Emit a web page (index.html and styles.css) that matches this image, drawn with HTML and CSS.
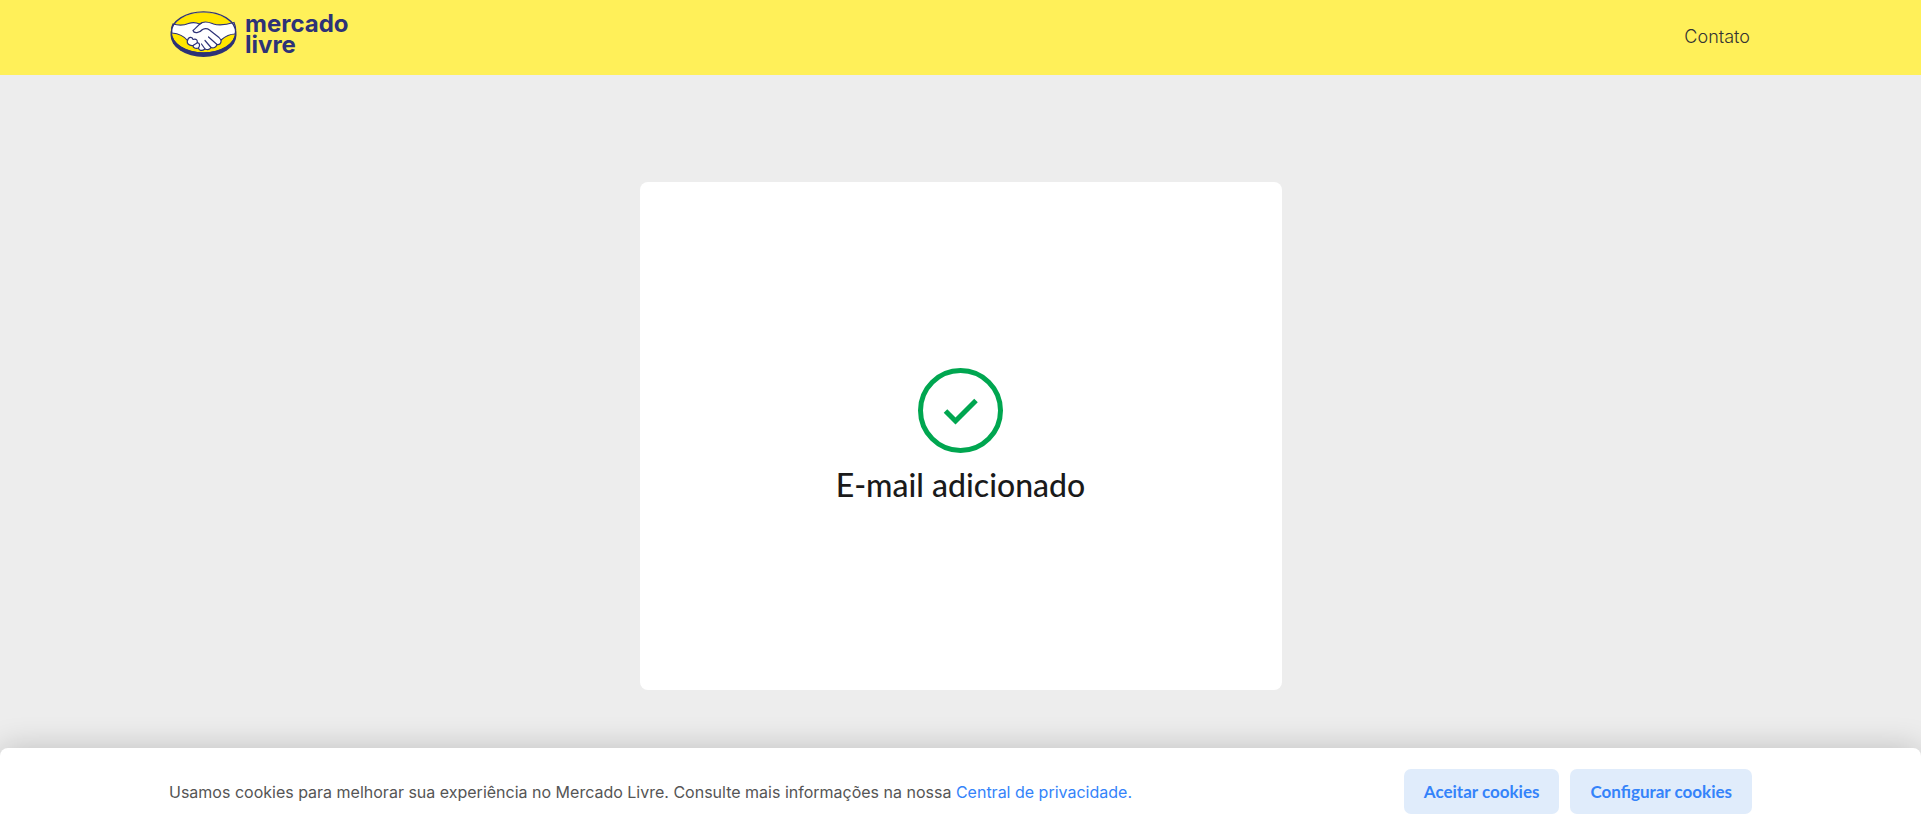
FILE: index.html
```html
<!DOCTYPE html>
<html lang="pt-BR">
<head>
  <meta charset="utf-8">
  <meta name="viewport" content="width=device-width, initial-scale=1">
  <title>E-mail adicionado</title>
  <link rel="stylesheet" href="styles.css">
</head>
<body>
  <header class="header">
    <a class="brand" href="#" aria-label="mercado livre">
      <svg class="brand-mark" viewBox="0 0 66 46" aria-hidden="true">
        <ellipse cx="33" cy="24" rx="33" ry="22" fill="#2d3277"/>
        <ellipse cx="33" cy="21.500" rx="31.800" ry="19.800" fill="#ffe600"/>
        <path d="M2.500 13C8 14.500 13 14.500 18 12.500C22 11 26 11.500 29 13L32 11.500C36 10 39 11.500 43 13C49 15 57 13.500 63.500 11.500C65 15 65.500 20 64.500 23C59 23 54 26 50.500 29C51 32.500 49 34 46.500 33.500C45.500 36.500 43 37.500 40.500 36.500C39.500 38.500 37 39 34.500 38C31 40.500 28.500 39.500 28 37C25 38 22.500 37 22.500 34.500C18.500 35 16 32.500 17 29.500C13 24.500 7 22.500 1.500 22C0.800 18.500 1.200 15.500 2.500 13Z" fill="#fff" stroke="#2d3277" stroke-width="1.200"/>
        <path d="M31 12C27.500 14 25.500 17 22.500 19.500C23.500 23 29 22 32 18.500C35 17 37 17.500 39 19L48.500 26.500L50.500 29M38 26L46.500 33.500M34.500 29.500L40.500 36.500M31 33L34.500 38M17 29.500C18 25.500 22 25.500 22.500 28.500C26 27.500 27.500 29.500 26.500 32C29 31.500 30 34 28 37M22.500 34.500L26.500 32" fill="none" stroke="#2d3277" stroke-width="1.200" stroke-linejoin="round" stroke-linecap="round"/>
        <ellipse cx="33" cy="21.500" rx="32.200" ry="20.700" fill="none" stroke="#2d3277" stroke-width="1.300"/>
      </svg>
      <span class="brand-name"><span>mercado</span><span>livre</span></span>
    </a>
    <nav><a class="header-link" href="#">Contato</a></nav>
  </header>

  <main class="content">
    <section class="card">
      <svg class="check" viewBox="0 0 85 85" aria-hidden="true">
        <circle cx="42.500" cy="42.500" r="40" fill="none" stroke="#00a650" stroke-width="5"/>
        <path d="M27.500 43L37.500 53L58 32.500" fill="none" stroke="#00a650" stroke-width="5"/>
      </svg>
      <h1 class="title">E-mail adicionado</h1>
    </section>
  </main>

  <aside class="cookies" aria-label="Cookies">
    <p class="cookies-text">Usamos cookies para melhorar sua experiência no Mercado Livre. Consulte mais informações na nossa <a class="cookies-link" href="#">Central de privacidade.</a></p>
    <div class="cookies-actions">
      <button class="button" type="button">Aceitar cookies</button>
      <button class="button" type="button">Configurar cookies</button>
    </div>
  </aside>
</body>
</html>
```
FILE: styles.css
```css
* {
  box-sizing: border-box;
}

body {
  margin: 0;
  min-height: 100vh;
  display: flex;
  flex-direction: column;
  background: #ededed;
  color: #1a1a1a;
  font-family: Lato, "Liberation Sans", sans-serif;
}

.header {
  display: flex;
  justify-content: space-between;
  align-items: flex-start;
  padding: 11px 171px 18px 170px;
  background: #fff059;
}

.brand {
  display: flex;
  gap: 8px;
  color: #2d3277;
  text-decoration: none;
}

.brand-mark {
  width: 67px;
  height: 46px;
}

.brand-name {
  display: flex;
  flex-direction: column;
  padding-top: 2px;
  font-family: Inter, sans-serif;
  font-size: 24px;
  font-weight: 700;
  line-height: 21px;
}

.header-link {
  display: block;
  padding-top: 14px;
  color: #333;
  font-family: Inter, sans-serif;
  font-size: 18px;
  font-weight: 300;
  line-height: 24px;
  text-decoration: none;
}

.content {
  flex: 1;
  padding: 107px 24px 58px;
}

.card {
  display: flex;
  flex-direction: column;
  align-items: center;
  max-width: 642px;
  margin: 0 auto;
  padding: 186px 24px 185px;
  border-radius: 8px;
  background: #fff;
}

.check {
  width: 85px;
  height: 85px;
}

.title {
  margin: 12px 0 0;
  font-size: 32px;
  font-weight: 500;
  line-height: 40px;
}

.cookies {
  display: flex;
  justify-content: space-between;
  align-items: center;
  gap: 24px;
  padding: 21px 169px;
  border-radius: 8px 8px 0 0;
  background: #fff;
  box-shadow: 0 0 32px rgba(0, 0, 0, 0.2);
}

.cookies-text {
  margin: 0;
  color: #555;
  font-family: Inter, sans-serif;
  font-size: 16px;
  font-weight: 400;
  line-height: 24px;
}

.cookies-link {
  color: #3483fa;
  text-decoration: none;
}

.cookies-actions {
  display: flex;
  flex-shrink: 0;
  gap: 11px;
}

.button {
  padding: 0 20px;
  border: 0;
  border-radius: 7px;
  background: #e0ecfb;
  color: #3483fa;
  font-family: inherit;
  font-size: 17px;
  font-weight: 700;
  line-height: 45px;
  cursor: pointer;
}
```
